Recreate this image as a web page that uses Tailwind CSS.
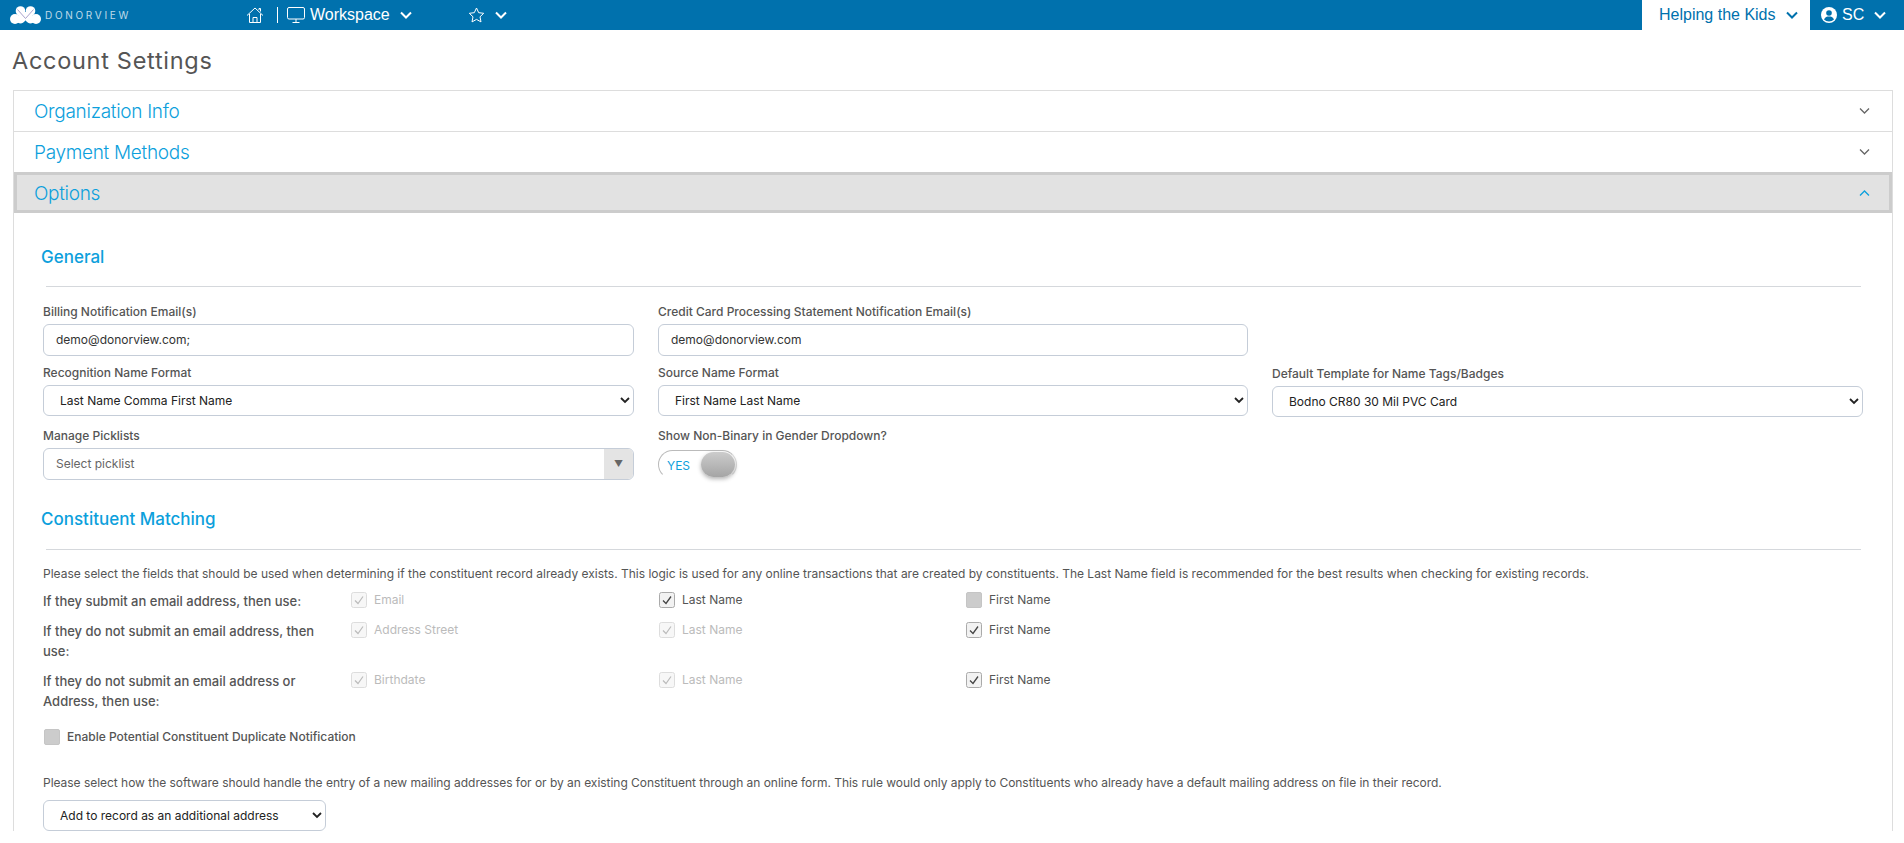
<!DOCTYPE html>
<html lang="en">
<head>
<meta charset="UTF-8">
<title>Account Settings</title>
<script src="https://cdn.jsdelivr.net/npm/@tailwindcss/browser@4"></script>
</head>
<body class="h-[843px] overflow-hidden bg-white font-['Inter',sans-serif] text-[12px] text-[#555]">
<!-- Top bar -->
<header class="flex h-[30px] bg-[#0071ad] text-white font-['Liberation_Sans',sans-serif]">
  <div class="flex w-[246px] items-center pl-[10px]">
    <svg class="h-[18px] w-[31px]" viewBox="0 0 31 18" fill="#fff"><circle cx="5" cy="13" r="5"/><circle cx="26" cy="13" r="5"/><circle cx="11" cy="13" r="4.500"/><circle cx="20" cy="13" r="4.500"/><circle cx="10.500" cy="5" r="4.800"/><circle cx="20.500" cy="5" r="4.800"/><path d="M8 6h15l-7 9z"/><path d="M15.500 15 11 18h9z" fill="#0071ad"/><path d="M7.500 3.500 15.500 12.500 23.500 3.500" fill="none" stroke="#a9a3cc" stroke-width="1"/></svg>
    <span class="ml-[4px] font-['Inter',sans-serif] text-[10px] tracking-[0.27em] text-white/75">DONORVIEW</span>
  </div>
  <div class="flex items-center">
    <svg class="h-[18px] w-[18px]" viewBox="0 0 18 18" fill="none" stroke="#fff" stroke-width="1"><path d="M1 9.500 9 2l8 7.500M3.500 8v8.500h11V8M7 16.500v-5h4v5M13 4V2.500h1.500v3"/></svg>
    <span class="ml-[13px] h-[16px] w-px bg-white"></span>
    <svg class="ml-[9px] h-[18px] w-[18px]" viewBox="0 0 18 18" fill="none" stroke="#fff" stroke-width="1"><rect x=".5" y="1.500" width="17" height="11.500" rx="1.500"/><path d="M9 13v3M5.500 16.500h7"/></svg>
    <span class="ml-[5px] text-[16px]">Workspace</span>
    <svg class="ml-[10px] h-[8px] w-[12px]" viewBox="0 0 12 8" fill="none" stroke="#fff" stroke-width="2"><path d="m1 1.500 5 5 5-5"/></svg>
    <svg class="ml-[56px] h-[18px] w-[17px]" viewBox="0 0 17 17" fill="none" stroke="#fff" stroke-width="1"><path d="m8.500 1.500 2.200 4.700 5 .6-3.700 3.500 1 5.100-4.500-2.500-4.500 2.500 1-5.100L1.300 6.800l5-.6z"/></svg>
    <svg class="ml-[10px] h-[8px] w-[12px]" viewBox="0 0 12 8" fill="none" stroke="#fff" stroke-width="2"><path d="m1 1.500 5 5 5-5"/></svg>
  </div>
  <div class="ml-auto flex">
    <div class="flex w-[168px] items-center bg-white pl-[17px] text-[16px] text-[#0071ad]">
      Helping the Kids
      <svg class="ml-[10px] h-[8px] w-[12px]" viewBox="0 0 12 8" fill="none" stroke="#0071ad" stroke-width="2"><path d="m1 1.500 5 5 5-5"/></svg>
    </div>
    <div class="flex w-[94px] items-center pl-[11px] text-[16px]">
      <svg class="h-[16px] w-[16px]" viewBox="0 0 16 16"><circle cx="8" cy="8" r="8" fill="#fff"/><circle cx="8" cy="6" r="2.800" fill="#0071ad"/><path d="M3 12.500c1-2.500 3-3 5-3s4 .5 5 3a7 7 0 0 1-10 0z" fill="#0071ad"/></svg>
      <span class="ml-[5px]">SC</span>
      <svg class="ml-[10px] h-[8px] w-[12px]" viewBox="0 0 12 8" fill="none" stroke="#fff" stroke-width="2"><path d="m1 1.500 5 5 5-5"/></svg>
    </div>
  </div>
</header>

<h1 class="flex h-[60px] items-center pt-[2px] pl-[12px] text-[23.500px] leading-none font-normal tracking-[0.03em] text-[#555]">Account Settings</h1>

<!-- Accordion -->
<div class="ml-[13px] mr-[11px] border border-b-0 border-[#ddd]">
  <div class="flex h-[41px] items-center justify-between border-b border-[#ddd] pl-[20px] pr-[22px] text-[19px] font-light tracking-[-0.3px] text-[#0ca0dc]">
    <span class="pt-[2px]">Organization Info</span>
    <svg class="h-[8px] w-[11px]" viewBox="0 0 11 8" fill="none" stroke="#666" stroke-width="1.300"><path d="m1 1.500 4.500 4.500L10 1.500"/></svg>
  </div>
  <div class="flex h-[40px] items-center justify-between pl-[20px] pr-[22px] text-[19px] font-light tracking-[-0.3px] text-[#0ca0dc]">
    <span class="pt-[2px]">Payment Methods</span>
    <svg class="h-[8px] w-[11px]" viewBox="0 0 11 8" fill="none" stroke="#666" stroke-width="1.300"><path d="m1 1.500 4.500 4.500L10 1.500"/></svg>
  </div>
  <div class="flex h-[41px] items-center justify-between border-[3px] border-[#ccc] bg-[#e2e2e2] pl-[17px] pr-[19px] text-[19px] font-light tracking-[-0.3px] text-[#0ca0dc]">
    <span class="pt-[4px]">Options</span>
    <svg class="h-[8px] w-[11px]" viewBox="0 0 11 8" fill="none" stroke="#0ca0dc" stroke-width="1.300"><path d="m1 6.500 4.500-4.500L10 6.500"/></svg>
  </div>

  <div class="pl-[29px] pr-[28px]">
    <!-- General -->
    <h2 class="-ml-[2px] pt-[33px] text-[17px] leading-[22px] font-medium text-[#0ca0dc]">General</h2>
    <hr class="mt-[18px] ml-[3px] mr-[3px] border-[#d5d8dc]">
    <div class="mt-[16px] grid grid-cols-[591px_590px_591px] gap-x-[24px]">
      <div>
        <label class="block h-[21px] leading-[18px] font-medium">Billing Notification Email(s)</label>
        <div class="flex h-[32px] items-center rounded-[6px] border border-[#c5cdd8] px-[12px] text-[#333]">demo@donorview.com;</div>
      </div>
      <div>
        <label class="block h-[21px] leading-[18px] font-medium">Credit Card Processing Statement Notification Email(s)</label>
        <div class="flex h-[32px] items-center rounded-[6px] border border-[#c5cdd8] px-[12px] text-[#333]">demo@donorview.com</div>
      </div>
      <div></div>

      <div class="mt-[8px]">
        <label class="block h-[21px] leading-[18px] font-medium">Recognition Name Format</label>
        <div class="flex h-[31px] items-center justify-between rounded-[6px] border border-[#c5cdd8] pl-[16px] pr-[3px] text-[#222]">Last Name Comma First Name
          <svg class="h-[7px] w-[10px]" viewBox="0 0 10 7" fill="none" stroke="#222" stroke-width="1.800"><path d="m1 1 4 4 4-4"/></svg></div>
      </div>
      <div class="mt-[8px]">
        <label class="block h-[21px] leading-[18px] font-medium">Source Name Format</label>
        <div class="flex h-[31px] items-center justify-between rounded-[6px] border border-[#c5cdd8] pl-[16px] pr-[3px] text-[#222]">First Name Last Name
          <svg class="h-[7px] w-[10px]" viewBox="0 0 10 7" fill="none" stroke="#222" stroke-width="1.800"><path d="m1 1 4 4 4-4"/></svg></div>
      </div>
      <div class="mt-[9px]">
        <label class="block h-[21px] leading-[18px] font-medium">Default Template for Name Tags/Badges</label>
        <div class="flex h-[31px] items-center justify-between rounded-[6px] border border-[#c5cdd8] pl-[16px] pr-[3px] text-[#222]">Bodno CR80 30 Mil PVC Card
          <svg class="h-[7px] w-[10px]" viewBox="0 0 10 7" fill="none" stroke="#222" stroke-width="1.800"><path d="m1 1 4 4 4-4"/></svg></div>
      </div>

      <div class="mt-[10px]">
        <label class="block h-[21px] leading-[18px] font-medium">Manage Picklists</label>
        <div class="flex h-[32px] items-center justify-between overflow-hidden rounded-[6px] border border-[#c5cdd8] pl-[12px] text-[#666]">Select picklist
          <span class="flex h-full w-[29px] items-center justify-center bg-[#e4e4e4] text-[9px] text-[#666]">▼</span></div>
      </div>
      <div class="mt-[10px]">
        <label class="block h-[21px] leading-[18px] font-medium">Show Non-Binary in Gender Dropdown?</label>
        <div class="relative mt-[2px] h-[29px] w-[79px] rounded-full border border-[#bbb] border-b-transparent border-r-[#ddd] bg-white">
          <span class="absolute left-[8px] top-[6px] text-[12px] text-[#0ca0dc]">YES</span>
          <span class="absolute right-[1px] top-[1px] h-[25px] w-[34px] rounded-full bg-gradient-to-b from-[#ccc] to-[#a5a5a5] shadow-[0_2px_4px_rgba(0,0,0,0.3)]"></span>
        </div>
      </div>
      <div></div>
    </div>

    <!-- Constituent Matching -->
    <h2 class="mt-[28px] -ml-[2px] text-[17px] leading-[22px] font-medium text-[#0ca0dc]">Constituent Matching</h2>
    <hr class="mt-[19px] ml-[3px] mr-[3px] border-[#d5d8dc]">
    <p class="mt-[15px] leading-[18px] tracking-[-0.01px]">Please select the fields that should be used when determining if the constituent record already exists. This logic is used for any online transactions that are created by constituents. The Last Name field is recommended for the best results when checking for existing records.</p>

    <div class="mt-[9px] grid grid-cols-[308px_308px_307px_auto] leading-[20px]">
      <div class="h-[30px] -translate-y-px pr-[20px] text-[13px] font-medium">If they submit an email address, then use:</div>
      <div class="flex h-[30px] items-start gap-[7px] text-[#bbb]"><svg class="h-[16px] w-[16px]" viewBox="0 0 16 16"><rect x=".5" y=".5" width="15" height="15" rx="2" fill="#f7f7f7" stroke="#ddd"/><path d="m4 8.500 3 3 5-7" fill="none" stroke="#bbb" stroke-width="1.200"/></svg><span class="leading-[16px]">Email</span></div>
      <div class="flex h-[30px] items-start gap-[7px]"><svg class="h-[16px] w-[16px]" viewBox="0 0 16 16"><rect x=".5" y=".5" width="15" height="15" rx="2" fill="#f2f2f2" stroke="#aaa"/><path d="m4 8.500 3 3 5-7" fill="none" stroke="#444" stroke-width="1.300"/></svg><span class="leading-[16px]">Last Name</span></div>
      <div class="flex h-[30px] items-start gap-[7px]"><span class="h-[16px] w-[16px] rounded-[2px] border border-[#c5c5c5] bg-[#ccc]"></span><span class="leading-[16px]">First Name</span></div>

      <div class="h-[50px] -translate-y-px pr-[20px] text-[13px] font-medium">If they do not submit an email address, then use:</div>
      <div class="flex h-[50px] items-start gap-[7px] text-[#bbb]"><svg class="h-[16px] w-[16px]" viewBox="0 0 16 16"><rect x=".5" y=".5" width="15" height="15" rx="2" fill="#f7f7f7" stroke="#ddd"/><path d="m4 8.500 3 3 5-7" fill="none" stroke="#bbb" stroke-width="1.200"/></svg><span class="leading-[16px]">Address Street</span></div>
      <div class="flex h-[50px] items-start gap-[7px] text-[#bbb]"><svg class="h-[16px] w-[16px]" viewBox="0 0 16 16"><rect x=".5" y=".5" width="15" height="15" rx="2" fill="#f7f7f7" stroke="#ddd"/><path d="m4 8.500 3 3 5-7" fill="none" stroke="#bbb" stroke-width="1.200"/></svg><span class="leading-[16px]">Last Name</span></div>
      <div class="flex h-[50px] items-start gap-[7px]"><svg class="h-[16px] w-[16px]" viewBox="0 0 16 16"><rect x=".5" y=".5" width="15" height="15" rx="2" fill="#f2f2f2" stroke="#aaa"/><path d="m4 8.500 3 3 5-7" fill="none" stroke="#444" stroke-width="1.300"/></svg><span class="leading-[16px]">First Name</span></div>

      <div class="h-[50px] -translate-y-px pr-[20px] text-[13px] font-medium">If they do not submit an email address or Address, then use:</div>
      <div class="flex h-[50px] items-start gap-[7px] text-[#bbb]"><svg class="h-[16px] w-[16px]" viewBox="0 0 16 16"><rect x=".5" y=".5" width="15" height="15" rx="2" fill="#f7f7f7" stroke="#ddd"/><path d="m4 8.500 3 3 5-7" fill="none" stroke="#bbb" stroke-width="1.200"/></svg><span class="leading-[16px]">Birthdate</span></div>
      <div class="flex h-[50px] items-start gap-[7px] text-[#bbb]"><svg class="h-[16px] w-[16px]" viewBox="0 0 16 16"><rect x=".5" y=".5" width="15" height="15" rx="2" fill="#f7f7f7" stroke="#ddd"/><path d="m4 8.500 3 3 5-7" fill="none" stroke="#bbb" stroke-width="1.200"/></svg><span class="leading-[16px]">Last Name</span></div>
      <div class="flex h-[50px] items-start gap-[7px]"><svg class="h-[16px] w-[16px]" viewBox="0 0 16 16"><rect x=".5" y=".5" width="15" height="15" rx="2" fill="#f2f2f2" stroke="#aaa"/><path d="m4 8.500 3 3 5-7" fill="none" stroke="#444" stroke-width="1.300"/></svg><span class="leading-[16px]">First Name</span></div>
    </div>

    <div class="mt-[6px] ml-[1px] flex items-center gap-[7px] font-medium">
      <span class="h-[16px] w-[16px] rounded-[2px] border border-[#c5c5c5] bg-[#ccc]"></span>Enable Potential Constituent Duplicate Notification
    </div>
    <p class="mt-[28px] leading-[18px] tracking-[-0.03px]">Please select how the software should handle the entry of a new mailing addresses for or by an existing Constituent through an online form. This rule would only apply to Constituents who already have a default mailing address on file in their record.</p>
    <div class="mt-[8px] flex h-[31px] w-[283px] items-center justify-between rounded-[6px] border border-[#c5cdd8] pl-[16px] pr-[3px] text-[#222]">Add to record as an additional address
      <svg class="h-[7px] w-[10px]" viewBox="0 0 10 7" fill="none" stroke="#222" stroke-width="1.800"><path d="m1 1 4 4 4-4"/></svg></div>
  </div>
</div>
</body>
</html>
